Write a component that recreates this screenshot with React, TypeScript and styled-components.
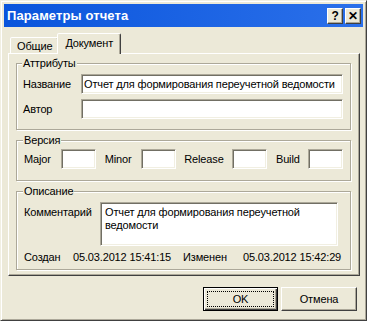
import React from 'react'
import styled, { createGlobalStyle } from 'styled-components'

const GlobalStyle = createGlobalStyle`
  body {
    margin: 0;
    background: #ffffff;
    font-family: "Liberation Sans", Arial, sans-serif;
    font-size: 11px;
    letter-spacing: -0.15px;
  }
`

const Window = styled.div`
  width: 367px;
  height: 321px;
  box-sizing: border-box;
  background: #ece9d8;
  border: 1px solid;
  border-color: #f1efe2 #404040 #404040 #f1efe2;
  box-shadow: inset 1px 1px #ffffff, inset -1px -1px #aca899;
  padding: 3px;
  display: flex;
  flex-direction: column;
`

const TitleBar = styled.div`
  height: 23px;
  flex: none;
  display: flex;
  align-items: center;
  justify-content: space-between;
  padding: 0 2px 0 3px;
  background: linear-gradient(to right, #0a55dc, #2b70ea);
`

const TitleText = styled.span`
  color: #ffffff;
  font-weight: bold;
  font-size: 13px;
  letter-spacing: 0.1px;
`

const CaptionButtons = styled.div`
  display: flex;
  gap: 2px;
`

const CaptionButton = styled.div`
  width: 14px;
  height: 14px;
  background: #ece9d8;
  border: 1px solid;
  border-color: #ffffff #404040 #404040 #ffffff;
  box-shadow: inset -1px -1px #aca899;
  display: flex;
  align-items: center;
  justify-content: center;
  font-weight: bold;
  font-size: 12px;
  color: #000;
  line-height: 1;
`

const Content = styled.div`
  flex: 1;
  display: flex;
  flex-direction: column;
  padding: 6px 3px 0 4px;
`

const TabRow = styled.div`
  display: flex;
  align-items: flex-end;
  padding-left: 2px;
  margin-bottom: -1px;
  position: relative;
  z-index: 1;
`

const Tab = styled.div<{ $active?: boolean }>`
  box-sizing: border-box;
  height: ${(p) => (p.$active ? '21px' : '16px')};
  margin: ${(p) => (p.$active ? '0 -1px 0 -2px' : '0 0 1px 0')};
  padding: ${(p) => (p.$active ? '3px 7px 0 7px' : '2px 6px 0 6px')};
  background: #ece9d8;
  border: 1px solid;
  border-bottom: none;
  border-color: #ffffff #404040 transparent #ffffff;
  box-shadow: inset -1px 0 #aca899;
  border-radius: 2px 2px 0 0;
  color: #000;
  line-height: 13px;
`

const Panel = styled.div`
  border: 1px solid;
  border-color: #ffffff #404040 #404040 #ffffff;
  box-shadow: inset -1px -1px #aca899;
  padding: 3px 8px 5px 7px;
  display: flex;
  flex-direction: column;
  gap: 4px;
`

const Group = styled.fieldset<{ $pad: string }>`
  margin: 0;
  border: 1px solid #aca899;
  box-shadow: inset 1px 1px #ffffff, 1px 1px #ffffff;
  padding: ${(p) => p.$pad};
  min-width: 0;
`

const Legend = styled.legend`
  padding: 0 1px;
  margin-left: -1px;
  line-height: 13px;
  background: #ece9d8;
  color: #000;
`

const Rows = styled.div`
  display: flex;
  flex-direction: column;
  gap: 5px;
`

const Row = styled.div<{ $top?: boolean }>`
  display: flex;
  align-items: ${(p) => (p.$top ? 'flex-start' : 'center')};
`

const Label = styled.span<{ $w: number; $top?: boolean }>`
  width: ${(p) => p.$w}px;
  flex: none;
  color: #000;
  white-space: nowrap;
  padding-top: ${(p) => (p.$top ? '4px' : '0')};
`

const Field = styled.div<{ $w?: number; $h?: number; $multi?: boolean }>`
  box-sizing: border-box;
  width: ${(p) => (p.$w ? `${p.$w}px` : 'auto')};
  flex: ${(p) => (p.$w ? 'none' : '1')};
  height: ${(p) => p.$h ?? 20}px;
  background: #ffffff;
  border: 1px solid;
  border-color: #aca899 #ffffff #ffffff #aca899;
  box-shadow: inset 1px 1px #716f64, inset -1px -1px #f1efe2;
  padding: ${(p) => (p.$multi ? '3px 4px' : '3px 2px')};
  line-height: 13px;
  color: #000;
  overflow: hidden;
  white-space: ${(p) => (p.$multi ? 'normal' : 'nowrap')};
`

const VersionRow = styled.div`
  display: flex;
  justify-content: space-between;
  align-items: center;
`

const Cell = styled.div`
  display: flex;
  align-items: center;
`

const InfoRow = styled.div`
  display: flex;
  margin-top: 5px;
  line-height: 13px;
  color: #000;
`

const Info = styled.span<{ $w: number }>`
  width: ${(p) => p.$w}px;
  flex: none;
  white-space: nowrap;
`

const ButtonRow = styled.div`
  display: flex;
  justify-content: flex-end;
  gap: 3px;
  margin-top: 11px;
  padding-right: 3px;
`

const Button = styled.div<{ $default?: boolean }>`
  box-sizing: border-box;
  width: ${(p) => (p.$default ? '75px' : '76px')};
  height: 24px;
  background: #ece9d8;
  border: 1px solid;
  border-color: ${(p) => (p.$default ? '#000' : '#ffffff #404040 #404040 #ffffff')};
  box-shadow: ${(p) =>
    p.$default
      ? 'inset 1px 1px #ffffff, inset -1px -1px #404040, inset -2px -2px #aca899'
      : 'inset -1px -1px #aca899'};
  display: flex;
  align-items: center;
  justify-content: center;
  padding: ${(p) => (p.$default ? '3px' : '0')};
  color: #000;
`

const FocusRect = styled.div`
  flex: 1;
  align-self: stretch;
  border: 1px dotted #000;
  display: flex;
  align-items: center;
  justify-content: center;
`

const versions = [
  { label: 'Major', w: 37 },
  { label: 'Minor', w: 36 },
  { label: 'Release', w: 48 },
  { label: 'Build', w: 32 },
]

export default function App() {
  return (
    <>
      <GlobalStyle />
      <Window>
        <TitleBar>
          <TitleText>Параметры отчета</TitleText>
          <CaptionButtons>
            <CaptionButton>?</CaptionButton>
            <CaptionButton>✕</CaptionButton>
          </CaptionButtons>
        </TitleBar>
        <Content>
          <TabRow>
            <Tab>Общие</Tab>
            <Tab $active>Документ</Tab>
          </TabRow>
          <Panel>
            <Group $pad="4px 7px 10px 6px">
              <Legend>Аттрибуты</Legend>
              <Rows>
                <Row>
                  <Label $w={58}>Название</Label>
                  <Field>Отчет для формирования переучетной ведомости</Field>
                </Row>
                <Row>
                  <Label $w={58}>Автор</Label>
                  <Field />
                </Row>
              </Rows>
            </Group>
            <Group $pad="2px 7px 11px 7px">
              <Legend>Версия</Legend>
              <VersionRow>
                {versions.map((v) => (
                  <Cell key={v.label}>
                    <Label $w={v.w}>{v.label}</Label>
                    <Field $w={35} />
                  </Cell>
                ))}
              </VersionRow>
            </Group>
            <Group $pad="4px 12px 5px 7px">
              <Legend>Описание</Legend>
              <Row $top>
                <Label $w={76} $top>Комментарий</Label>
                <Field $h={44} $multi>
                  Отчет для формирования переучетной ведомости
                </Field>
              </Row>
              <InfoRow>
                <Info $w={49}>Создан</Info>
                <Info $w={110}>05.03.2012 15:41:15</Info>
                <Info $w={60}>Изменен</Info>
                <Info $w={110}>05.03.2012 15:42:29</Info>
              </InfoRow>
            </Group>
          </Panel>
          <ButtonRow>
            <Button $default>
              <FocusRect>OK</FocusRect>
            </Button>
            <Button>Отмена</Button>
          </ButtonRow>
        </Content>
      </Window>
    </>
  )
}
